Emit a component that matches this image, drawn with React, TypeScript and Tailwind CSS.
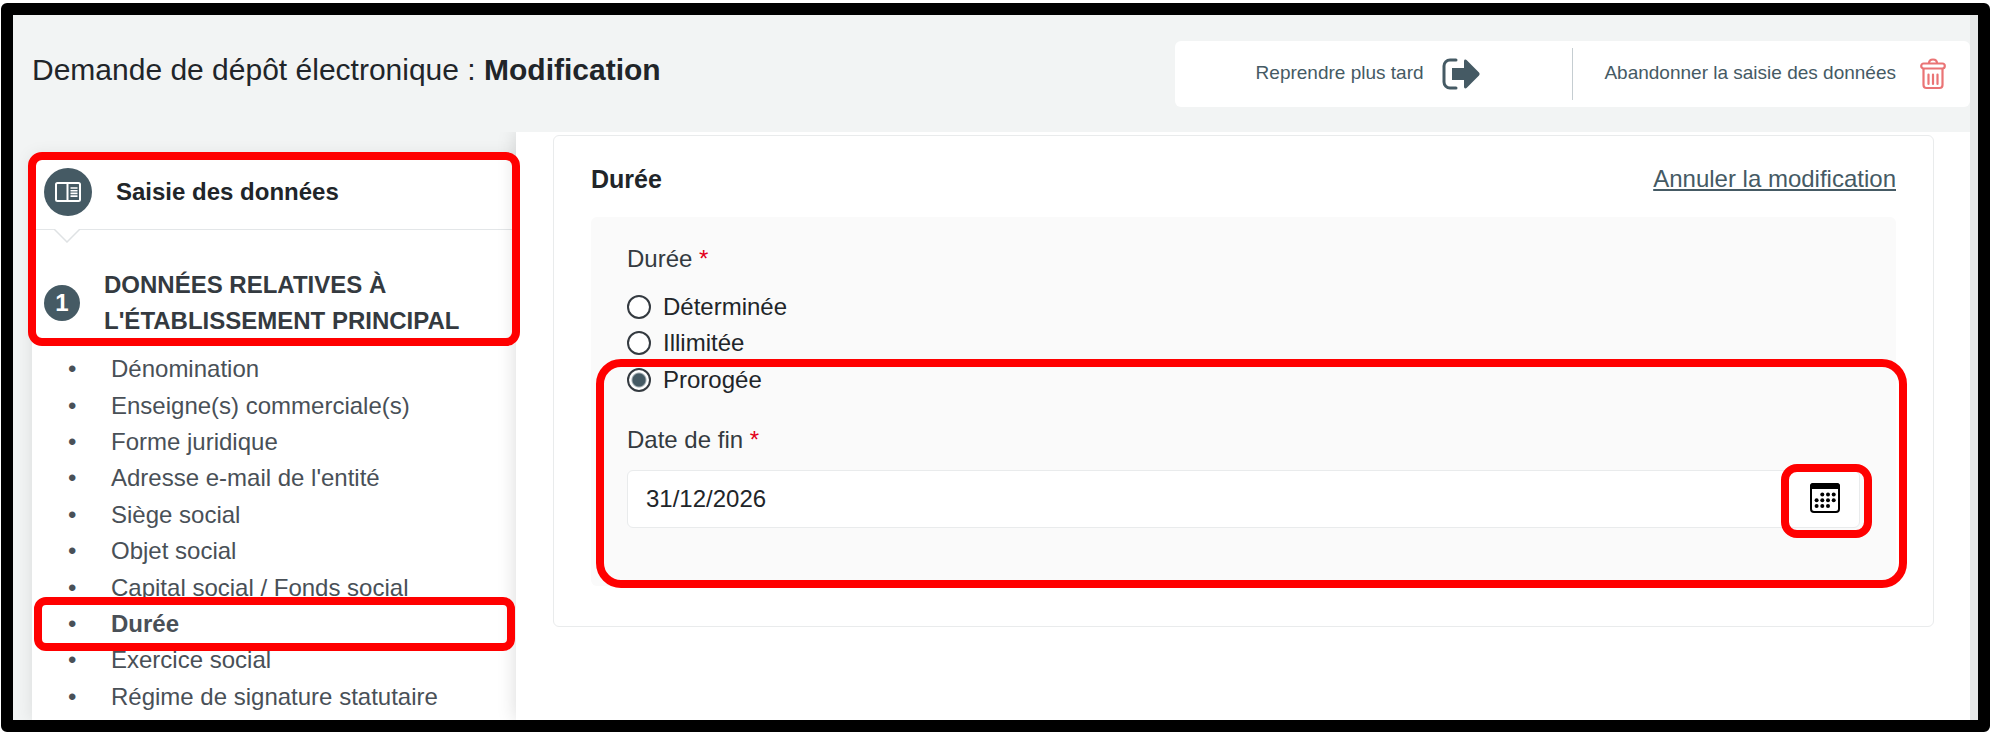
import { useState } from "react"

const sections = [
  "Dénomination",
  "Enseigne(s) commerciale(s)",
  "Forme juridique",
  "Adresse e-mail de l'entité",
  "Siège social",
  "Objet social",
  "Capital social / Fonds social",
  "Durée",
  "Exercice social",
  "Régime de signature statutaire",
]

const durations = ["Déterminée", "Illimitée", "Prorogée"]

function ExitIcon() {
  return (
    <svg width="38" height="32" viewBox="0 0 38 32" fill="none" aria-hidden="true">
      <path d="M14 2H8a6 6 0 0 0-6 6v16a6 6 0 0 0 6 6h6" stroke="#455a64" strokeWidth="3" strokeLinecap="round" />
      <path
        d="M10 10h12V3.500c0-2 1.500-2.500 2.800-1.200L37 14.500c.8.900.8 2.100 0 3L24.800 29.700c-1.300 1.300-2.800.8-2.800-1.200V22H10Z"
        fill="#455a64"
      />
    </svg>
  )
}

function TrashIcon() {
  return (
    <svg width="26" height="32" viewBox="0 0 26 32" fill="none" stroke="#ea7475" strokeWidth="2.200" aria-hidden="true">
      <path d="M9 5.500C9 3 10.500 1.500 13 1.500s4 1.500 4 4" />
      <rect x="1.200" y="5.500" width="23.600" height="5" rx="2.500" />
      <path d="M3.500 10.500V27a3 3 0 0 0 3 3h13a3 3 0 0 0 3-3V10.500" />
      <path d="M8.500 16.500v9.500M13 16.500v9.500M17.500 16.500v9.500" strokeLinecap="round" />
    </svg>
  )
}

function ReaderIcon() {
  return (
    <svg width="26" height="20" viewBox="0 0 26 20" fill="none" stroke="#fff" strokeWidth="2" aria-hidden="true">
      <rect x="1" y="1" width="24" height="18" rx="1.500" />
      <path d="M12.500 1v18" />
      <path d="M15.500 6h7M15.500 8.700h7M15.500 11.400h7M15.500 14.100h7" strokeWidth="1.600" />
    </svg>
  )
}

function CalendarIcon() {
  return (
    <svg width="30" height="30" viewBox="0 0 30 30" aria-hidden="true">
      <rect x="1" y="1" width="28" height="28" rx="3" fill="#fff" stroke="#000" strokeWidth="2" />
      <path d="M0 6V3a3 3 0 0 1 3-3h24a3 3 0 0 1 3 3v3Z" />
      <g>
        <circle cx="12.300" cy="11.500" r="2" />
        <circle cx="18" cy="11.500" r="2" />
        <circle cx="23.700" cy="11.500" r="2" />
        <circle cx="6.600" cy="17.200" r="2" />
        <circle cx="12.300" cy="17.200" r="2" />
        <circle cx="18" cy="17.200" r="2" />
        <circle cx="23.700" cy="17.200" r="2" />
        <circle cx="6.600" cy="22.900" r="2" />
        <circle cx="12.300" cy="22.900" r="2" />
        <circle cx="18" cy="22.900" r="2" />
      </g>
    </svg>
  )
}

function Header() {
  return (
    <header className="flex h-[117px] shrink-0 items-start justify-between pl-[19px]">
      <h1 className="pt-[37px] text-[30px] leading-9">
        Demande de dépôt électronique : <strong>Modification</strong>
      </h1>
      <div className="mt-[26px] flex h-[66px] w-[41%] items-center rounded-md bg-white text-[19px] text-[#455a64]">
        <button className="flex h-[52px] w-1/2 items-center justify-center gap-[18px] border-r border-[#c5cdd1] pr-3">
          <span className="pb-0.5">Reprendre plus tard</span>
          <ExitIcon />
        </button>
        <button className="flex h-[52px] w-1/2 items-center justify-end gap-6 pr-6">
          <span className="pb-0.5">Abandonner la saisie des données</span>
          <TrashIcon />
        </button>
      </div>
    </header>
  )
}

function Sidebar() {
  return (
    <nav className="relative mt-6 ml-[19px] w-[484px] shrink-0">
      <div className="absolute inset-0 -z-10 bg-white shadow-[0_0_16px_rgba(0,0,0,0.1)]" />

      <div className="relative flex h-[74px] items-center gap-6 border-b border-[#e3e6e8] pb-0.5 pl-3">
        <span className="flex size-12 items-center justify-center rounded-full bg-[#455a64]">
          <ReaderIcon />
        </span>
        <span className="text-[24px] font-bold">Saisie des données</span>
        <svg className="absolute top-full left-[22px]" width="26" height="14" viewBox="0 0 26 14" aria-hidden="true">
          <path d="M0 0L13 13L26 0" fill="#fff" stroke="#dfe2e4" strokeWidth="1.500" />
        </svg>
      </div>

      <div className="flex items-center gap-6 pt-[37px] pl-3">
        <span className="flex size-9 shrink-0 items-center justify-center rounded-full bg-[#455a64] text-[24px] font-bold text-white">
          1
        </span>
        <h2 className="text-[24px] leading-9 font-bold text-[#343a40] uppercase">
          Données relatives à l'établissement principal
        </h2>
      </div>

      <ul className="mt-3 grid h-[364px] text-[24px] text-[#495057]">
        {sections.map((label) => (
          <li key={label} className="relative flex items-center">
            <span className="ml-9 w-[43px]">•</span>
            <a href="#" className={label === "Durée" ? "font-bold" : ""}>
              {label}
            </a>
            {label === "Durée" && (
              <span className="pointer-events-none absolute -inset-y-[9px] right-px left-0.5 z-20 rounded-xl border-8 border-[#ff0000]" />
            )}
          </li>
        ))}
      </ul>

      <span className="pointer-events-none absolute -top-1 -right-1 -left-1 z-20 h-[194px] rounded-[14px] border-8 border-[#ff0000]" />
    </nav>
  )
}

function DurationForm() {
  const [duration, setDuration] = useState("Prorogée")
  const [endDate, setEndDate] = useState("31/12/2026")

  return (
    <section className="rounded-md border border-[#e9ebec] px-[37px] pb-10">
      <div className="flex items-center justify-between pt-[25px] pb-5">
        <h2 className="text-[25px] leading-9 font-bold">Durée</h2>
        <a href="#" className="text-[24px] leading-9 text-[#455a64] underline">
          Annuler la modification
        </a>
      </div>

      <form className="relative rounded-md bg-[#fafafa] px-9 pt-6 pb-[58px] text-[24px] leading-9">
        <fieldset>
          <legend className="pb-3 text-[#343a40]">
            Durée <span className="text-[#e3001b]">*</span>
          </legend>
          <div className="grid h-[109px]">
            {durations.map((label) => (
              <label key={label} className="flex items-center gap-3">
                <input
                  type="radio"
                  name="duration"
                  checked={duration === label}
                  onChange={() => setDuration(label)}
                  className="size-6 appearance-none rounded-full border-2 border-[#343a40] bg-white checked:bg-[radial-gradient(circle,#455a64_6px,#fff_8px)]"
                />
                {label}
              </label>
            ))}
          </div>
        </fieldset>

        <label htmlFor="end-date" className="mt-6 block text-[#343a40]">
          Date de fin <span className="text-[#e3001b]">*</span>
        </label>
        <div className="mt-3 flex h-[58px] rounded-md border border-[#e9ebec] bg-white">
          <input
            id="end-date"
            value={endDate}
            onChange={(e) => setEndDate(e.target.value)}
            className="min-w-0 flex-1 bg-transparent pl-[18px]"
          />
          <button type="button" aria-label="Calendrier" className="relative flex w-[68px] items-center justify-center pb-0.5">
            <CalendarIcon />
            <span className="pointer-events-none absolute -top-[7px] -right-[13px] -bottom-[11px] -left-[10px] rounded-2xl border-8 border-[#ff0000]" />
          </button>
        </div>

        <span className="pointer-events-none absolute top-[142px] -right-[11px] -bottom-0.5 left-[5px] rounded-[25px] border-8 border-[#ff0000]" />
      </form>
    </section>
  )
}

export default function App() {
  return (
    <div className="h-screen bg-white px-px pt-[3px] pb-[2px] font-['Liberation_Sans',Arial,sans-serif] text-[#212529]">
      <div className="flex h-full overflow-hidden rounded-md border-[12px] border-black bg-[#f2f4f4]">
        <div className="flex min-w-0 flex-1 flex-col overflow-hidden">
          <Header />
          <div className="isolate flex min-h-0 flex-1 overflow-hidden">
            <Sidebar />
            <main className="relative z-10 min-w-0 flex-1 bg-white pt-[3px] pr-9 pl-[37px] shadow-[0_0_18px_rgba(0,0,0,0.15)]">
              <DurationForm />
            </main>
          </div>
        </div>
        <div className="w-2 shrink-0 bg-[#e5e7e7]" />
      </div>
    </div>
  )
}
